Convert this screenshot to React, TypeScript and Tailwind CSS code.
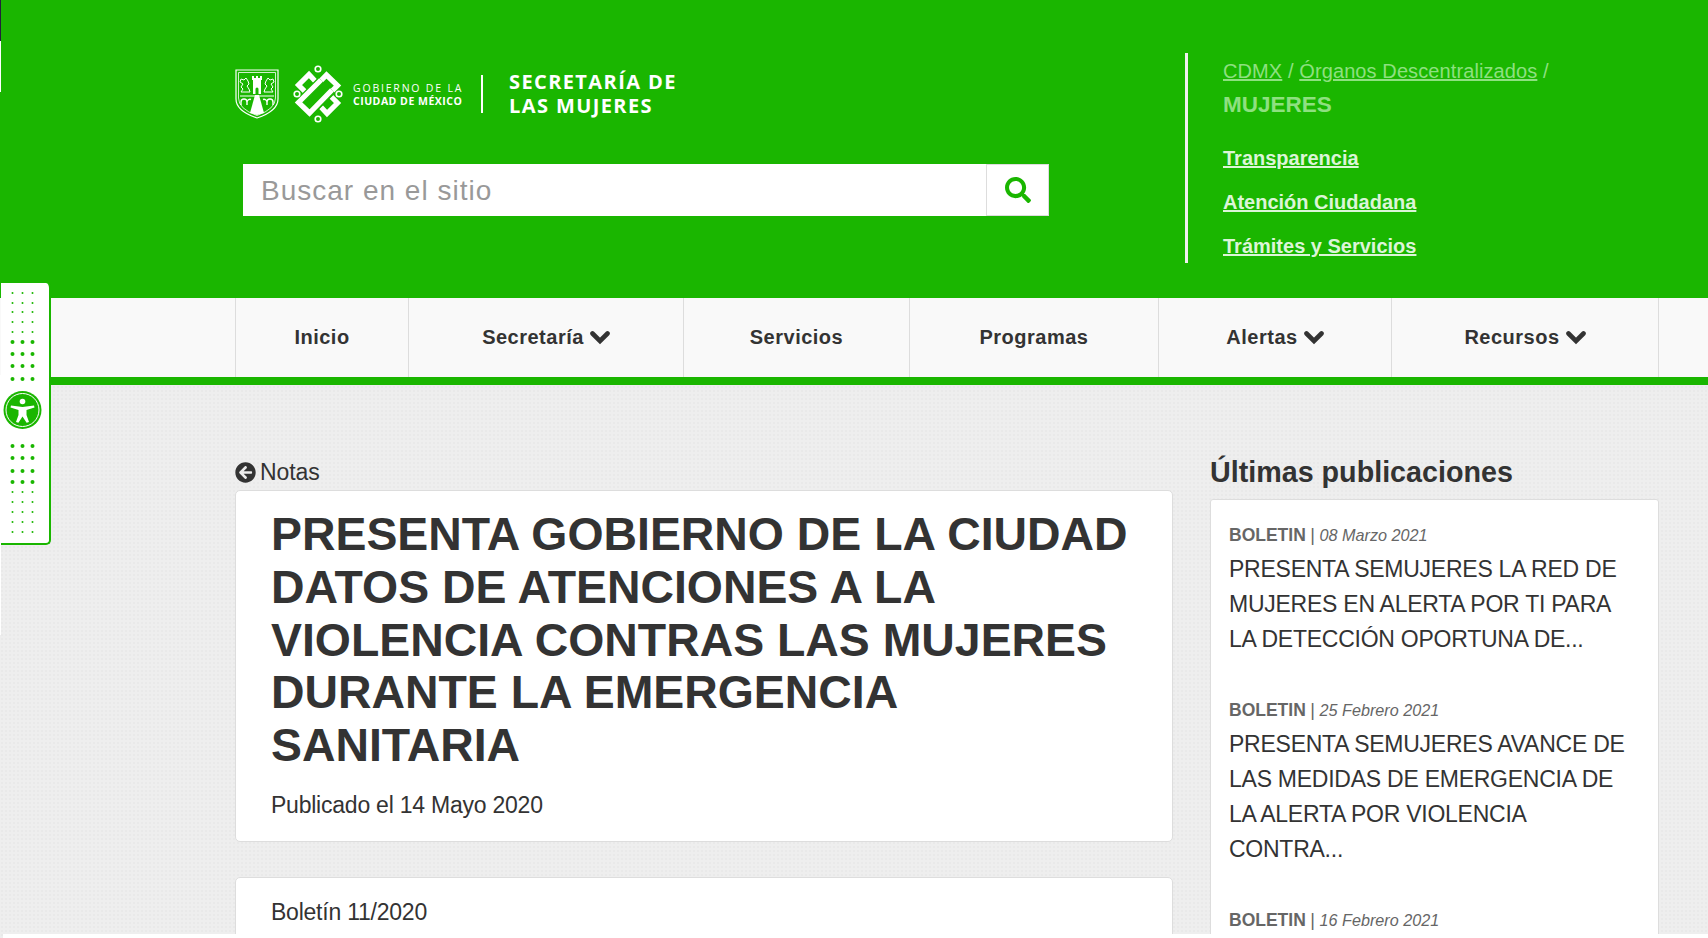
import { FaArrowCircleLeft, FaSearch } from 'react-icons/fa';

const navItems = [
  { label: 'Inicio', width: 'w-[173px]' },
  { label: 'Secretaría', width: 'w-[275px]', caret: true },
  { label: 'Servicios', width: 'w-[226px]' },
  { label: 'Programas', width: 'w-[249px]' },
  { label: 'Alertas', width: 'w-[233px]', caret: true },
  { label: 'Recursos', width: 'w-[268px]', caret: true },
];

const posts = [
  {
    date: '08 Marzo 2021',
    lines: ['PRESENTA SEMUJERES LA RED DE', 'MUJERES EN ALERTA POR TI PARA', 'LA DETECCIÓN OPORTUNA DE...'],
  },
  {
    date: '25 Febrero 2021',
    lines: ['PRESENTA SEMUJERES AVANCE DE', 'LAS MEDIDAS DE EMERGENCIA DE', 'LA ALERTA POR VIOLENCIA', 'CONTRA...'],
  },
  { date: '16 Febrero 2021', lines: [] },
];

function Shield() {
  return (
    <svg width="44" height="50" viewBox="0 0 44 50" fill="none" className="shrink-0">
      <path d="M1 1H43V30Q43 42 22 49Q1 42 1 30Z" stroke="white" strokeWidth="1.2" />
      <path d="M3.5 3.5H40.5V29Q40.5 40 22 46.5Q3.5 40 3.5 29Z" stroke="white" strokeWidth="0.8" />
      <path d="M17 7h2v2h2V7h2v2h2V7h2v4h-1v14H18V11h-1z" fill="white" />
      <path d="M20.500 25v-5a1.500 1.500 0 0 1 3 0v5z" fill="#1ab600" />
      <path d="M6 10l3 1 2-2 2 3 1 3-2 2 2 3 1 3H6l2-3-2-2 2-3-3-2z" stroke="white" strokeWidth="1" />
      <path d="M38 10l-3 1-2-2-2 3-1 3 2 2-2 3-1 3h9l-2-3 2-2-2-3 3-2z" stroke="white" strokeWidth="1" />
      <path d="M5 27H39" stroke="white" strokeWidth="1" />
      <path d="M20 26h4l5 18-7 2-7-2z" fill="white" />
      <path d="M6 36v-3a3 3 0 0 1 6 0v3M12 36v-3a3 3 0 0 1 4-2.500M38 36v-3a3 3 0 0 0-6 0v3M32 36v-3a3 3 0 0 0-4-2.500" stroke="white" strokeWidth="1.400" />
    </svg>
  );
}

function Knot() {
  const under = { stroke: '#1ab600', strokeWidth: 7.6 };
  const over = { stroke: 'white', strokeWidth: 5.2 };
  const bands = [
    'M-2 -12L-9 -19.500L-19.500 -9L-8 2.500',
    'M2 12L9 19.500L19.500 9L8 -2.500',
    'M-14 4L8.500 -19L19.500 -8.500L-3 14',
    'M14 -4L-8.500 19L-19.500 8.500L3 -14',
  ];
  return (
    <svg width="50" height="58" viewBox="-25 -29 50 58" fill="none" className="shrink-0">
      {bands.map((d) => (
        <g key={d} strokeLinejoin="miter">
          <path d={d} {...under} />
          <path d={d} {...over} />
        </g>
      ))}
      <circle cx="0" cy="-25" r="2.800" stroke="white" strokeWidth="1.600" />
      <circle cx="0" cy="25" r="2.800" stroke="white" strokeWidth="1.600" />
      <circle cx="-21" cy="0" r="2.800" stroke="white" strokeWidth="1.600" />
      <circle cx="21" cy="0" r="2.800" stroke="white" strokeWidth="1.600" />
    </svg>
  );
}

function Caret() {
  return (
    <svg width="20" height="16" viewBox="0 0 20 16" fill="none" className="shrink-0">
      <path d="M2.500 4.500L10 12L17.500 4.500" stroke="#333" strokeWidth="4.600" strokeLinecap="round" />
    </svg>
  );
}

function AccessWidget() {
  const smallTop = [10, 20, 29, 39, 49];
  const bigTop = [59, 71, 83, 96];
  const bigBottom = [163, 175, 188, 199];
  const smallBottom = [209, 219, 229, 239, 249];
  const cols = [11.500, 21.500, 31.500];
  return (
    <div className="absolute left-[1px] top-[283px] h-[262px] w-[50px] rounded-br-[5px] rounded-tr-[5px] border-b-2 border-r-2 border-[#1ab600] bg-white">
      <svg width="48" height="260" viewBox="0 0 48 260">
        {smallTop.concat(smallBottom).map((y) =>
          cols.map((x) => <circle key={`${x}-${y}`} cx={x} cy={y} r="1" fill="#1ab600" />)
        )}
        {bigTop.concat(bigBottom).map((y) =>
          cols.map((x) => <circle key={`${x}-${y}`} cx={x} cy={y} r="2" fill="#1ab600" />)
        )}
        <circle cx="21.500" cy="127" r="19" fill="#1ab600" />
        <circle cx="21.500" cy="127" r="16.500" fill="none" stroke="white" strokeWidth="1" />
        <circle cx="21.500" cy="118.500" r="2.800" fill="white" />
        <path
          d="M10 122.500L21.500 124L33 122.500L33.500 124.500L25.500 127L25.500 132L28 139L25.600 139.800L21.500 133.500L17.400 139.800L15 139L17.500 132L17.500 127L9.500 124.500Z"
          fill="white"
        />
      </svg>
    </div>
  );
}

export default function App() {
  return (
    <div className="relative h-[938px] w-[1708px] overflow-hidden bg-[#eeeeee] font-['Liberation_Sans',Arial,sans-serif] text-[#333]">
      <header className="flex h-[298px] bg-[#1ab600] pl-[235px]">
        <div className="w-[950px] shrink-0">
          <div className="mt-[65px] flex h-[58px] items-center">
            <Shield />
            <div className="ml-[14px]">
              <Knot />
            </div>
            <div className="ml-[10px] w-[112px] font-['Open_Sans',sans-serif] text-white">
              <div className="whitespace-nowrap text-[10.5px] leading-[14px] tracking-[1.8px]">GOBIERNO DE LA</div>
              <div className="whitespace-nowrap text-[10.5px] font-bold leading-[13px] tracking-[0.5px]">CIUDAD DE MÉXICO</div>
            </div>
            <div className="ml-[16px] h-[38px] w-[2px] bg-white" />
            <div className="ml-[26px] font-['Open_Sans',sans-serif] text-[20px] font-bold leading-[24px] tracking-[1.400px] text-white">
              <div>SECRETARÍA DE</div>
              <div>LAS MUJERES</div>
            </div>
          </div>
          <form className="ml-[8px] mt-[41px] flex h-[52px] w-[806px]">
            <input
              placeholder="Buscar en el sitio"
              className="h-full w-[743px] bg-white px-[18px] pt-[2px] text-[28px] tracking-[1px] text-[#333] outline-none placeholder:text-[#999]"
            />
            <button type="button" className="flex h-full w-[63px] items-center justify-center border border-[#ddd] bg-white text-[#1ab600]">
              <FaSearch className="size-[26px]" />
            </button>
          </form>
        </div>
        <div className="mt-[53px] h-[210px] border-l-[3px] border-[#f0f0f0] pl-[35px]">
          <p className="text-[20px] leading-[36px] tracking-[0.1px] text-[#8ee080]">
            <a className="underline">CDMX</a> / <a className="underline">Órganos Descentralizados</a> /
          </p>
          <p className="text-[22.500px] font-bold leading-[32px] text-[#8ee080]">MUJERES</p>
          <ul className="mt-[25px] flex flex-col gap-[20px] text-[20px] font-bold leading-[24px] text-[#dcf5d8]">
            <li><a className="underline">Transparencia</a></li>
            <li><a className="underline">Atención Ciudadana</a></li>
            <li><a className="underline">Trámites y Servicios</a></li>
          </ul>
        </div>
      </header>

      <nav className="h-[87px] border-b-[8px] border-[#1ab600] bg-[#f9f9f9] pl-[235px]">
        <ul className="flex h-full">
          {navItems.map((item) => (
            <li
              key={item.label}
              className={`${item.width} flex items-center justify-center gap-[6px] border-l border-[#ddd] pb-[2px] text-[20px] font-bold tracking-[0.5px] last:border-r`}
            >
              {item.label}
              {item.caret && <Caret />}
            </li>
          ))}
        </ul>
      </nav>

      <main className="flex h-[553px] bg-[radial-gradient(#e9e9e9_1px,transparent_1px)] bg-[length:4px_4px] pl-[235px] pt-[72px]">
        <section className="w-[938px] shrink-0">
          <a className="flex h-[31px] items-center gap-[4px] text-[23px] tracking-[-0.1px]">
            <FaArrowCircleLeft className="size-[21px]" />
            Notas
          </a>
          <div className="mt-[2px] h-[352px] rounded-[5px] border border-[#ddd] bg-white pl-[35px] pr-[30px] pt-[17px]">
            <h1 className="text-[46.400px] font-bold leading-[52.800px]">
              PRESENTA GOBIERNO DE LA CIUDAD DATOS DE ATENCIONES A LA VIOLENCIA CONTRAS LAS MUJERES DURANTE LA EMERGENCIA SANITARIA
            </h1>
            <p className="mt-[18px] text-[23px] leading-[30px] tracking-[-0.23px]">Publicado el 14 Mayo 2020</p>
          </div>
          <div className="mt-[35px] h-[200px] rounded-[5px] border border-[#ddd] bg-white pl-[35px] pt-[19px]">
            <p className="text-[23px] leading-[30px] tracking-[-0.23px]">Boletín 11/2020</p>
          </div>
        </section>
        <aside className="ml-[37px] w-[449px] shrink-0">
          <h2 className="h-[30px] text-[28.700px] font-bold leading-[30px]">Últimas publicaciones</h2>
          <div className="mt-[12px] h-[500px] rounded-[3px] border border-[#ddd] bg-white pl-[18px] pt-[23px]">
            {posts.map((post) => (
              <article key={post.date} className="mb-[41px]">
                <p className="h-[24px] text-[16.200px] leading-[24px] text-[#666]">
                  <b className="text-[17.500px]">BOLETIN</b> <span className="text-[18px]">|</span> <i>{post.date}</i>
                </p>
                <div className="mt-[5px] text-[23px] leading-[35px] tracking-[-0.25px]">
                  {post.lines.map((line) => (
                    <div key={line}>{line}</div>
                  ))}
                </div>
              </article>
            ))}
          </div>
        </aside>
      </main>

      <AccessWidget />
      <div className="absolute bottom-0 left-[3px] right-0 h-[4px] bg-white" />
      <div className="absolute left-0 top-0 h-[41px] w-[1px] bg-[#22223a]" />
      <div className="absolute left-0 top-[41px] h-[51px] w-[1px] bg-white" />
      <div className="absolute left-0 top-[375px] h-[260px] w-[1px] bg-white" />
    </div>
  );
}
